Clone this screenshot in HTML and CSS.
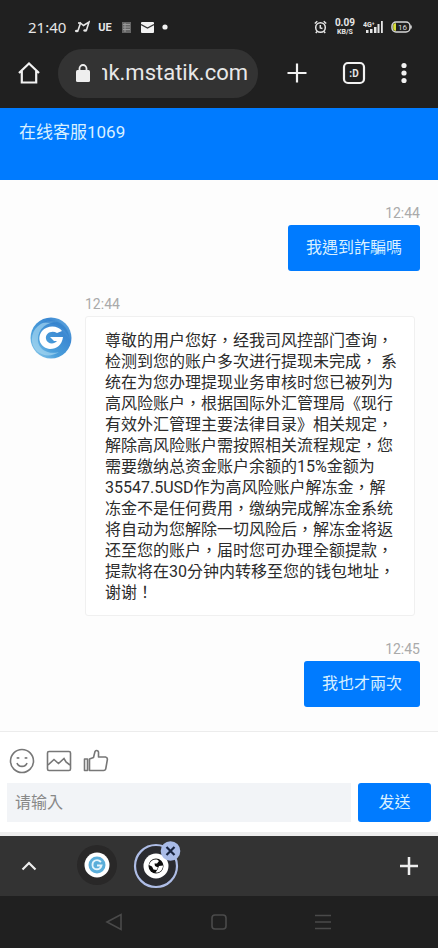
FILE: index.html
```html
<!DOCTYPE html>
<html lang="zh-TW">
<head>
<meta charset="utf-8">
<meta name="viewport" content="width=device-width, initial-scale=1">
<title>在线客服1069</title>
<link rel="stylesheet" href="styles.css">
</head>
<body>
<div class="browser">
  <div class="status">
    <span class="clock">21:40</span>
    <svg width="16" height="14" viewBox="0 0 16 14" fill="none" stroke="#e6e6e6" stroke-width="1.6"><path d="M4 10.500 6.500 3 9.500 5.500 15 2 12.500 10"/><path d="M6.500 3H4"/><ellipse cx="2.800" cy="11" rx="1.900" ry="1.200" fill="#e6e6e6" stroke="none"/><ellipse cx="11.200" cy="10.500" rx="1.900" ry="1.200" fill="#e6e6e6" stroke="none"/></svg>
    <span class="tag">UE</span>
    <svg class="dim" width="9" height="11" viewBox="0 0 9 11"><rect width="9" height="11" fill="#666"/><path d="M1 2.500H8M1 5H8M1 7.500H8M3 1V10" fill="none" stroke="#999"/></svg>
    <svg width="13" height="11" viewBox="0 0 13 11"><rect width="13" height="11" rx="1" fill="#f2f2f2"/><path d="M0 2.500 6.500 6 13 2.500" fill="none" stroke="#333" stroke-width="1.300"/></svg>
    <svg width="6" height="6" viewBox="0 0 6 6"><circle cx="3" cy="3" r="2.600" fill="#f2f2f2"/></svg>
    <span class="fill"></span>
    <svg width="13" height="14" viewBox="0 0 13 14" fill="none" stroke="#e6e6e6" stroke-width="1.500"><circle cx="6.500" cy="7.500" r="4.800"/><path d="M.8 3.500 3.300 1.300M12.200 3.500 9.700 1.300M6.300 5V8L8.500 8.500M3 11.500 1.800 13M10 11.500 11.200 13"/></svg>
    <span class="speed"><b>0.09</b><small>KB/S</small></span>
    <svg width="20" height="14" viewBox="0 0 20 14" fill="#e6e6e6"><text x="0" y="7" font-size="7" font-weight="700">4G⁺</text><path d="M3 10h2.500v3H3zM7 9h2.500v4H7zM11 7h2.500v6H11zM14.500 4h2v9h-2zM18 1h1.800v12H18z"/></svg>
    <svg width="21" height="12" viewBox="0 0 21 12"><rect x="1" y="1" width="18" height="10" rx="4" fill="none" stroke="#d8d8d8" stroke-width="1.500"/><path d="M5 2.200H4A2 2 0 0 0 2.200 4V8A2 2 0 0 0 4 9.800H5Z" fill="#d8df3a"/><path d="M20 4.500V7.500" stroke="#d8d8d8" stroke-width="1.500"/><text x="7" y="9" font-size="8" fill="#ddd">16</text></svg>
  </div>
  <div class="toolbar">
    <button class="icon" aria-label="Home"><svg width="24" height="24" viewBox="0 0 24 24" fill="none" stroke="#f2f2f2" stroke-width="2.200"><path d="M2 12 12 2.500 22 12M4.800 10V21.500H19.200V10"/></svg></button>
    <div class="address">
      <svg width="14" height="18" viewBox="0 0 14 18"><rect y="6" width="14" height="12" rx="1.500" fill="#eee"/><path d="M3.500 7V4.500a3.500 3.500 0 0 1 7 0V7" fill="none" stroke="#eee" stroke-width="1.800"/></svg>
      <span class="url">nk.mstatik.com</span>
    </div>
    <div class="actions">
      <button class="icon" aria-label="New tab"><svg width="20" height="20" viewBox="0 0 20 20" stroke="#f2f2f2" stroke-width="2.200"><path d="M10 .5V19.500M.5 10H19.500"/></svg></button>
      <button class="icon" aria-label="Tabs"><svg width="24" height="24" viewBox="0 0 24 24"><rect x="2" y="2" width="20" height="20" rx="4" fill="none" stroke="#f2f2f2" stroke-width="2.200"/><text x="12" y="15.500" font-size="10" font-weight="700" text-anchor="middle" fill="#e6e6e6">:D</text></svg></button>
      <button class="icon" aria-label="Menu"><svg width="6" height="22" viewBox="0 0 6 22" fill="#f2f2f2"><circle cx="3" cy="3.500" r="2.600"/><circle cx="3" cy="11" r="2.600"/><circle cx="3" cy="18.500" r="2.600"/></svg></button>
    </div>
  </div>
</div>
<header class="title">在线客服1069</header>
<main class="chat">
  <article class="msg mine"><time>12:44</time><p class="bubble">我遇到詐騙嗎</p></article>
  <article class="msg theirs">
    <svg class="avatar" width="42" height="42" viewBox="0 0 42 42">
      <defs><linearGradient id="g" x1="0" y1="1" x2="1" y2="0"><stop offset="0" stop-color="#9bd3ee"/><stop offset=".35" stop-color="#4a9fdb"/><stop offset=".7" stop-color="#3b88d2"/><stop offset="1" stop-color="#72b6e5"/></linearGradient></defs>
      <circle cx="21" cy="21" r="20.500" fill="url(#g)"/>
      <path d="M2 24C1 10 14 2 27 5 17 5 7 12 8 24 9 33 19 38 29 35 17 43 3 36 2 24Z" fill="#a9d9f1" opacity=".65"/>
      <path d="M12 6C24 0 38 7 39 20 34 10 24 5 12 6Z" fill="#2e7fc9" opacity=".6"/>
      <path d="M32 14C28 8 17 8 12 14 6 22 11 31 20 32 27 32 32 28 33 20H20L24 24H27C24 28 17 27 16 22 15 16 22 13 27 16Z" fill="#fff"/>
    </svg>
    <div class="body"><time>12:44</time><p class="card">尊敬的用户您好，经我司风控部门查询，检测到您的账户多次进行提现未完成， 系统在为您办理提现业务审核时您已被列为高风险账户，根据国际外汇管理局《现行有效外汇管理主要法律目录》相关规定，解除高风险账户需按照相关流程规定，您需要缴纳总资金账户余额的15%金额为35547.5USD作为高风险账户解冻金，解冻金不是任何费用，缴纳完成解冻金系统将自动为您解除一切风险后，解冻金将返还至您的账户，届时您可办理全额提款，提款将在30分钟内转移至您的钱包地址，谢谢！</p></div>
  </article>
  <article class="msg mine"><time>12:45</time><p class="bubble">我也才兩次</p></article>
</main>
<form class="composer">
  <div class="tools">
    <button type="button" class="icon" aria-label="表情"><svg width="26" height="26" viewBox="0 0 26 26" fill="none" stroke="#777" stroke-width="1.600"><circle cx="13" cy="13" r="11.500"/><path d="M8 15C9.500 19.500 16.500 19.500 18 15"/><path d="M7.800 10.500Q9 9 10.200 10.500M15.800 10.500Q17 9 18.200 10.500"/></svg></button>
    <button type="button" class="icon" aria-label="图片"><svg width="26" height="26" viewBox="0 0 26 26" fill="none" stroke="#777" stroke-width="1.600"><rect x="1.500" y="3.500" width="23" height="19" rx="1.500"/><path d="M2 17 8 11.500 12.500 15.500 18 10.500 20 14 24 17"/></svg></button>
    <button type="button" class="icon" aria-label="点赞"><svg width="26" height="26" viewBox="0 0 26 26" fill="none" stroke="#777" stroke-width="1.600" stroke-linejoin="round"><path d="M1.500 11H4.500V22.500H1.500ZM6.500 11 10.500 9.500 12 3.500C13.500 1.500 16 3 15.500 5.500V9H22.500Q24.800 9.500 24.300 12L22.800 20.500Q22.500 22.500 20.500 22.500H6.500Z"/></svg></button>
  </div>
  <div class="entry"><input type="text" placeholder="请输入" aria-label="请输入"><button class="send">发送</button></div>
</form>
<div class="tabs">
  <button class="icon" aria-label="Expand"><svg width="16" height="10" viewBox="0 0 16 10" fill="none" stroke="#eee" stroke-width="2.200"><path d="M1.500 8.500 8 2 14.500 8.500"/></svg></button>
  <button class="icon tab" aria-label="Tab 1"><svg width="44" height="44" viewBox="0 0 44 44"><circle cx="22" cy="21" r="20" fill="#292828"/><circle cx="22" cy="21" r="12.500" fill="#fff"/><circle cx="22" cy="21" r="8.500" fill="#5aaeda"/><path d="M26 18C22 14 17 17 17.500 21.500 18 26 25 27 26.500 21.500H22" fill="none" stroke="#e4f4fc" stroke-width="1.800"/></svg></button>
  <button class="icon" aria-label="Tab 2"><svg width="50" height="50" viewBox="0 0 50 50"><circle cx="23" cy="25" r="21" fill="#2a2b30" stroke="#aebde6" stroke-width="2.200"/><circle cx="23" cy="25" r="12.500" fill="#fff"/><circle cx="23" cy="25" r="7.500" fill="#0c0c0c"/><path d="M16 24C17 20 20 18 24 18.500L26 20 24 22.500H21.500L22 25 25 26.500 23.500 29 20.500 28.500 19 25.500ZM26 25 30 24.500C30 29 27 32 22.500 31.500L24.500 28.500Z" fill="#fff"/><circle cx="37.500" cy="10" r="9.800" fill="#a9bbe7"/><path d="M33.500 6 41.500 14M41.500 6 33.500 14" stroke="#17233f" stroke-width="2.200"/></svg></button>
  <span class="fill"></span>
  <button class="icon" aria-label="Add"><svg width="18" height="18" viewBox="0 0 18 18" stroke="#eee" stroke-width="2.500"><path d="M9 0V18M0 9H18"/></svg></button>
</div>
<nav class="system">
  <button class="icon" aria-label="Back"><svg width="18" height="18" viewBox="0 0 18 18" fill="none" stroke="#4a4a4a" stroke-width="1.600"><path d="M2 9 16 1.500V16.500Z"/></svg></button>
  <button class="icon" aria-label="Home screen"><svg width="18" height="18" viewBox="0 0 18 18" fill="none" stroke="#4a4a4a" stroke-width="1.600"><rect x="2" y="2" width="14" height="14" rx="3"/></svg></button>
  <button class="icon" aria-label="Recent"><svg width="18" height="18" viewBox="0 0 18 18" stroke="#4a4a4a" stroke-width="1.600"><path d="M1 2.500H17M1 9H17M1 15.500H17"/></svg></button>
</nav>
</body>
</html>
```
FILE: styles.css
```css
* { box-sizing: border-box; }
body {
  margin: 0;
  min-height: 100vh;
  display: flex;
  flex-direction: column;
  background: #fdfdfd;
  color: #2c2c2c;
  font: 16px/21px Roboto, "Noto Sans CJK TC", sans-serif;
}
svg { display: block; flex: none; }
p { margin: 0; }
button, input { font: inherit; border: 0; }
.icon { padding: 0; background: none; flex: none; }
.fill { flex: 1; }

.browser { background: #202020; padding-top: 16px; }
.status {
  display: flex;
  align-items: center;
  gap: 8px;
  height: 22px;
  padding: 0 26px 0 28px;
  color: #e6e6e6;
}
.clock { font-family: "Noto Sans", sans-serif; font-size: 15px; }
.tag { font-size: 11px; font-weight: 700; }
.dim { margin: 0 2px; }
.speed {
  display: flex;
  flex-direction: column;
  text-align: center;
  font-size: 10px;
  line-height: 10px;
}
.speed small { font-size: 7px; line-height: 8px; font-weight: 700; }
.toolbar {
  display: flex;
  align-items: center;
  height: 70px;
  padding: 0 31px 0 17px;
}
.address {
  flex: 1;
  min-width: 0;
  display: flex;
  align-items: center;
  gap: 12px;
  height: 49px;
  margin: 0 29px 0 17px;
  padding: 0 10px 0 18px;
  border-radius: 25px;
  background: #333;
}
.url {
  flex: 1;
  display: flex;
  justify-content: flex-end;
  overflow: hidden;
  color: #e8e8e8;
  font-size: 22px;
  line-height: 28px;
}
.actions { display: flex; align-items: center; gap: 35px; }

.title {
  height: 72px;
  padding: 14px 19px;
  background: #007bff;
  color: #d9f0ff;
  font-size: 17px;
}

.chat { flex: 1; padding: 23px 18px 23px 30px; }
.msg + .msg { margin-top: 23px; }
time {
  display: block;
  margin-bottom: 2px;
  color: #aaa;
  font-size: 14px;
  line-height: 20px;
}
.mine { display: flex; flex-direction: column; align-items: flex-end; }
.bubble {
  padding: 12px 18px 13px;
  border-radius: 3px;
  background: #007bff;
  color: #d9f0ff;
}
.theirs { display: flex; align-items: flex-start; gap: 13px; }
.avatar { margin-top: 23px; }
.body { flex: 1; margin-right: 5px; }
.card {
  padding: 13px 16px 12px 19px;
  border: 1px solid #f0f0f0;
  border-radius: 3px;
  background: #fff;
}

.composer {
  padding: 16px 7px 10px;
  border-top: 1px solid #ececec;
  border-bottom: 4px solid #eee;
  background: #fff;
}
.tools { display: flex; gap: 11px; padding-left: 2px; }
.entry { display: flex; gap: 7px; margin-top: 9px; }
.entry input {
  flex: 1;
  min-width: 0;
  height: 39px;
  padding: 0 8px;
  background: #f2f4f7;
}
.entry input::placeholder { color: #888; opacity: 1; }
.send {
  width: 73px;
  border-radius: 3px;
  background: #007bff;
  color: #d9f0ff;
}

.tabs {
  display: flex;
  align-items: center;
  height: 60px;
  padding: 0 20px 0 21px;
  background: #333;
}
.tab { margin: 0 14px 0 38px; }
.system {
  display: flex;
  align-items: center;
  justify-content: space-between;
  height: 52px;
  padding: 0 106px 0 105px;
  background: #202020;
}
```
